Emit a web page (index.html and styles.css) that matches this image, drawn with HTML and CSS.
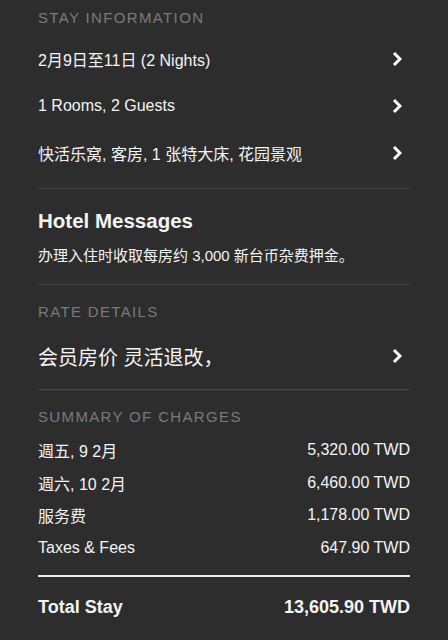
FILE: index.html
```html
<!DOCTYPE html>
<html lang="zh-CN">

<head>
    <meta charset="UTF-8">
    <meta name="viewport" content="width=device-width, initial-scale=1.0">
    <title>Stay Information</title>
    <link rel="stylesheet" href="styles.css">
</head>

<body>
    <div class="page">
        <section class="stay">
            <h2 class="label">Stay Information</h2>
            <a class="row" href="#">
                <span>2月9日至11日 (2 Nights)</span>
                <svg class="chev" viewBox="0 0 10 16"><path d="M2 2 L8 8 L2 14"/></svg>
            </a>
            <a class="row" href="#">
                <span>1 Rooms, 2 Guests</span>
                <svg class="chev" viewBox="0 0 10 16"><path d="M2 2 L8 8 L2 14"/></svg>
            </a>
            <a class="row" href="#">
                <span>快活乐窝, 客房, 1 张特大床, 花园景观</span>
                <svg class="chev" viewBox="0 0 10 16"><path d="M2 2 L8 8 L2 14"/></svg>
            </a>
        </section>

        <hr class="rule">

        <section class="messages">
            <h3>Hotel Messages</h3>
            <p>办理入住时收取每房约 3,000 新台币杂费押金。</p>
        </section>

        <hr class="rule">

        <section class="rate">
            <h2 class="label">Rate Details</h2>
            <a class="row row-big" href="#">
                <span>会员房价 灵活退改，</span>
                <svg class="chev" viewBox="0 0 10 16"><path d="M2 2 L8 8 L2 14"/></svg>
            </a>
        </section>

        <hr class="rule">

        <section class="summary">
            <h2 class="label">Summary of Charges</h2>
            <ul class="charges">
                <li><span>週五, 9 2月</span><span>5,320.00 TWD</span></li>
                <li><span>週六, 10 2月</span><span>6,460.00 TWD</span></li>
                <li><span>服务费</span><span>1,178.00 TWD</span></li>
                <li><span>Taxes &amp; Fees</span><span>647.90 TWD</span></li>
            </ul>
            <div class="total">
                <span>Total Stay</span>
                <span>13,605.90 TWD</span>
            </div>
        </section>
    </div>
</body>

</html>
```

FILE: styles.css
```css
body {
    margin: 0;
    background: #2d2d2d;
    color: #f4f4f4;
    font-family: "Liberation Sans", "Noto Sans CJK SC", sans-serif;
}

.page {
    padding: 0 38px;
}

.label {
    margin: 8px 0 8px;
    font-size: 15px;
    font-weight: normal;
    line-height: 20px;
    letter-spacing: 1.35px;
    text-transform: uppercase;
    color: #7a7a7a;
}

.row {
    display: flex;
    align-items: center;
    justify-content: space-between;
    height: 47px;
    font-size: 16px;
    color: #f4f4f4;
    text-decoration: none;
}

.stay .label {
    margin-bottom: 7px;
}

.row-big {
    height: 50px;
    font-size: 20px;
}

.chev {
    width: 10px;
    height: 16px;
    margin-right: 8px;
    fill: none;
    stroke: #fff;
    stroke-width: 3;
}

.rule {
    margin: 11px 0 0;
    border: 0;
    border-top: 1px solid #454545;
}

.stay + .rule {
    margin-top: 12px;
}

.messages h3 {
    margin: 19px 0 11px;
    font-size: 20.5px;
    line-height: 26px;
}

.messages p {
    margin: 0 0 17px;
    font-size: 15px;
    line-height: 22px;
}

.rate .label,
.summary .label {
    margin-top: 17px;
}

.rate .label {
    margin-bottom: 9px;
}

.rate .row-big {
    margin-bottom: 8px;
}

.rate + .rule {
    margin-top: 0;
}

.summary .label {
    margin-bottom: 7px;
}

.charges {
    list-style: none;
    margin: 0;
    padding: 0;
}

.charges li {
    display: flex;
    align-items: center;
    justify-content: space-between;
    height: 32.5px;
    font-size: 16px;
}

.total {
    display: flex;
    justify-content: space-between;
    align-items: center;
    margin-top: 11px;
    padding-top: 20px;
    border-top: 2px solid #eee;
    font-size: 18px;
    font-weight: bold;
}
```
